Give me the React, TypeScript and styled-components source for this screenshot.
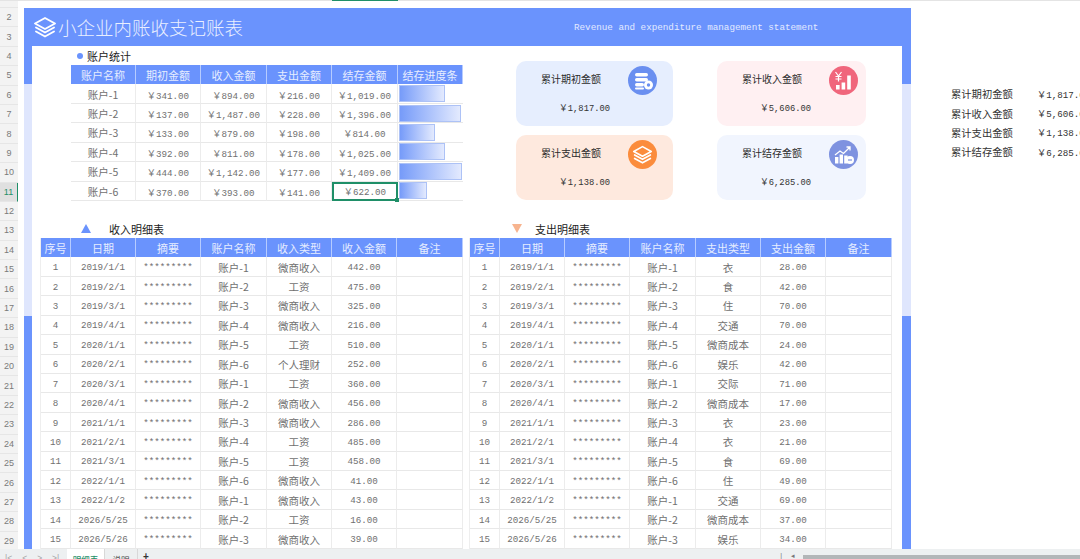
import React from 'react';
import styled, { createGlobalStyle } from 'styled-components';

const GlobalStyle = createGlobalStyle`
  html, body {
    margin: 0;
    padding: 0;
    background: #fff;
  }
  * {
    box-sizing: border-box;
  }
`;

const BLUE = '#6a93fd';
const PALE = '#dfe6fd';
const MONO = '"Liberation Mono", "Noto Sans CJK SC", monospace';
const CJK = '"Noto Sans CJK SC", "Liberation Sans", sans-serif';

const Page = styled.div`
  width: 1080px;
  height: 559px;
  overflow: hidden;
  display: flex;
  flex-direction: column;
  font-family: ${CJK};
  background: #fff;
`;
const Workspace = styled.div`
  height: 549px;
  display: flex;
  overflow: hidden;
`;
const Gutter = styled.div`
  width: 18px;
  flex: none;
  background: #f3f3f3;
  border-top: 1px solid #e4e4e4;
`;
const GutterCell = styled.div<{ $short?: boolean; $active?: boolean }>`
  height: ${p => (p.$short ? '7px' : '19.4px')};
  display: flex;
  align-items: center;
  justify-content: center;
  font: 9px "Liberation Sans", sans-serif;
  color: ${p => (p.$active ? '#1f8f68' : '#7a7a7a')};
  background: ${p => (p.$active ? '#e0e0e0' : 'transparent')};
  border-bottom: 1px solid #e6e6e6;
  border-right: ${p => (p.$active ? '1px solid #1f8f68' : 'none')};
`;
const Main = styled.div`
  flex: 1;
  min-width: 0;
  display: flex;
  flex-direction: column;
`;
const ColumnStrip = styled.div`
  height: 8px;
  flex: none;
  border-top: 1px solid #e4e4e4;
  position: relative;
`;
const ColumnMarker = styled.div`
  position: absolute;
  top: -1px;
  left: 314px;
  width: 66px;
  height: 1px;
  background: #1f8f68;
`;
const SheetRow = styled.div`
  flex: 1;
  display: flex;
  padding-left: 6px;
  min-height: 0;
`;
const Sheet = styled.div`
  width: 887px;
  flex: none;
  display: flex;
  flex-direction: column;
  overflow: hidden;
`;
const Banner = styled.div`
  height: 38px;
  flex: none;
  background: ${BLUE};
  display: flex;
  align-items: center;
  padding-left: 9px;
  color: #e9efff;
`;
const BannerTitle = styled.div`
  font-size: 18.5px;
  font-weight: 300;
  margin-left: 1px;
  width: 516px;
  white-space: nowrap;
`;
const BannerSub = styled.div`
  font: 9.25px ${MONO};
  white-space: nowrap;
  color: #e3eaff;
`;
const SheetBody = styled.div`
  flex: 1;
  min-height: 0;
  padding: 0 9px 0 8px;
  background: linear-gradient(
    to bottom,
    ${BLUE} 0,
    ${BLUE} 38px,
    ${PALE} 38px,
    ${PALE} 270px,
    ${BLUE} 270px,
    ${BLUE} 100%
  );
`;
const Inner = styled.div`
  height: 100%;
  background: #fff;
  overflow: hidden;
`;
const TopSection = styled.div`
  height: 173px;
  display: flex;
  padding-left: 39px;
`;
const AccountColumn = styled.div`
  width: 392px;
  flex: none;
`;
const SectionHeading = styled.div`
  height: 19px;
  display: flex;
  align-items: center;
  padding-left: 6px;
  font-size: 11px;
  color: #222;
`;
const Dot = styled.span`
  width: 6px;
  height: 6px;
  border-radius: 50%;
  background: ${BLUE};
  margin-right: 4px;
`;
const Table = styled.div<{ $cols: string; $edge?: boolean }>`
  display: grid;
  grid-template-columns: ${p => p.$cols};
  grid-auto-rows: 19.43px;
  box-shadow: ${p => (p.$edge ? '-1px 0 0 #eeeeee' : 'none')};
`;
const HeaderCell = styled.div`
  background: ${BLUE};
  color: #e6edff;
  font-size: 11px;
  display: flex;
  align-items: center;
  justify-content: center;
  border-right: 1px solid #b7ccff;
  white-space: nowrap;
  &:nth-last-child(1) {
    border-right: none;
  }
`;
const Cell = styled.div`
  display: flex;
  align-items: center;
  justify-content: center;
  padding-top: 2px;
  color: #707070;
  white-space: nowrap;
  font: 9.2px ${MONO};
  border-right: 1px solid #ececec;
  border-bottom: 1px solid #e8e8e8;
`;
const NameCell = styled(Cell)`
  font: 10.5px ${CJK};
  padding-top: 1px;
`;
const SelectedCell = styled(Cell)`
  position: relative;
  padding-top: 0;
  border: 2px solid #1f8f68;
`;
const FillHandle = styled.span`
  position: absolute;
  right: -3px;
  bottom: -3px;
  width: 4px;
  height: 4px;
  background: #1f8f68;
`;
const BarCell = styled.div`
  display: flex;
  align-items: center;
  padding-left: 1px;
  border-bottom: 1px solid #e8e8e8;
`;
const Bar = styled.div`
  height: 17px;
  background: linear-gradient(to right, #769bf9, #e3eafe);
  border: 1px solid #adc2f6;
`;
const CardGrid = styled.div`
  margin: 15px 0 0 53px;
  display: grid;
  grid-template-columns: 157px 149px;
  grid-auto-rows: 65px;
  column-gap: 44px;
  row-gap: 9px;
`;
const Card = styled.div<{ $bg: string }>`
  background: ${p => p.$bg};
  border-radius: 10px;
  padding: 5px 0 0 25px;
`;
const CardHead = styled.div`
  display: flex;
  align-items: flex-start;
`;
const CardLabel = styled.div`
  width: 86px;
  flex: none;
  padding-top: 6px;
  font-size: 10px;
  line-height: 14px;
  color: #2b2b2b;
  white-space: nowrap;
`;
const IconCircle = styled.div<{ $bg: string }>`
  width: 29px;
  height: 29px;
  margin-left: 1px;
  border-radius: 50%;
  background: ${p => p.$bg};
  display: flex;
  align-items: center;
  justify-content: center;
  flex: none;
`;
const CardValue = styled.div`
  margin: 7px 0 0 18px;
  font: 8.8px/14px ${MONO};
  color: #333;
  white-space: nowrap;
`;
const BottomSection = styled.div`
  display: flex;
  padding-left: 9px;
  gap: 7px;
`;
const DetailColumn = styled.div`
  width: 422px;
  flex: none;
`;
const DetailHeading = styled.div<{ $indent: number; $gap: number }>`
  height: 19px;
  display: flex;
  align-items: center;
  padding-left: ${p => p.$indent}px;
  gap: ${p => p.$gap}px;
  font-size: 11px;
  color: #222;
`;
const SideList = styled.div`
  margin-left: 40px;
  padding-top: 76px;
  flex: none;
  width: 200px;
`;
const SideRow = styled.div`
  height: 19.4px;
  display: flex;
  align-items: center;
  color: #333;
  white-space: nowrap;
`;
const SideLabel = styled.span`
  width: 86px;
  flex: none;
  font-size: 10.3px;
`;
const SideValue = styled.span`
  font: 9.2px ${MONO};
`;
const TabBar = styled.div`
  height: 10px;
  flex: none;
  background: #edf0f1;
  display: flex;
  overflow: hidden;
`;
const TabNav = styled.div`
  width: 67px;
  flex: none;
  display: flex;
  gap: 10px;
  padding: 2px 0 0 5px;
  color: #a5a5a5;
  font: 8.5px/14px "Liberation Sans", sans-serif;
`;
const Tab = styled.div<{ $active?: boolean; $w: number }>`
  width: ${p => p.$w}px;
  flex: none;
  text-align: center;
  padding-top: 3px;
  font: ${p => (p.$active ? 500 : 400)} 8.5px/14px ${CJK};
  background: ${p => (p.$active ? '#fff' : 'transparent')};
  color: ${p => (p.$active ? '#1f8f68' : '#444')};
  border-right: 1px solid #d8d8d8;
`;
const AddTab = styled.div`
  width: 20px;
  flex: none;
  padding: 1px 0 0 5px;
  color: #333;
  font: 700 10px/14px "Liberation Sans", sans-serif;
`;
const TabSpacer = styled.div`
  flex: none;
  width: 645px;
  display: flex;
  justify-content: flex-end;
  gap: 9px;
  padding: 3px 8px 0 0;
  color: #777;
  font: 7px/8px "Liberation Sans", sans-serif;
`;
const Scrollbar = styled.div`
  flex: 1;
  height: 4px;
  margin-top: 6px;
  background: #b2b6b8;
`;

const LayersIcon = ({ size }: { size: number }) => (
  <svg width={size} height={size} viewBox="0 0 24 24" fill="none" stroke="#fff" strokeWidth="1.9" strokeLinejoin="round" strokeLinecap="round">
    <path d="M12 3 22 8.5 12 14 2 8.5Z" />
    <path d="M3 12.5 12 17.5 21 12.5" />
    <path d="M3 16.5 12 21.5 21 16.5" />
  </svg>
);

const CoinsIcon = () => (
  <svg width="22" height="20" viewBox="0 0 22 20" fill="#fff">
    <rect x="3" y="2" width="13" height="3.4" rx="1.7" />
    <rect x="3" y="7" width="13" height="3.4" rx="1.7" />
    <rect x="3" y="12" width="9" height="3.4" rx="1.7" />
    <rect x="3" y="16.4" width="9" height="2" rx="1" />
    <circle cx="16.5" cy="14" r="4.5" />
    <circle cx="16.5" cy="14" r="1.7" fill="#6a8ff0" />
  </svg>
);

const IncomeIcon = () => (
  <svg width="22" height="22" viewBox="0 0 22 22" fill="none" stroke="#fff">
    <path d="M2.5 2 5.5 6 8.5 2M5.5 6V11.5M2.5 6.5H8.5M2.5 9H8.5" strokeWidth="1.2" />
    <g fill="#fff" stroke="none">
      <rect x="3" y="15" width="3.6" height="4.5" />
      <rect x="8.6" y="12.5" width="3.6" height="7" />
      <rect x="14.2" y="5.5" width="3.6" height="14" />
    </g>
  </svg>
);

const SavingsIcon = () => (
  <svg width="22" height="22" viewBox="0 0 22 22" fill="none" stroke="#fff">
    <path d="M2 11 7 7 10.5 9.5 17 3M13.5 3H17V6.5" strokeWidth="1.3" />
    <g fill="#fff" stroke="none">
      <rect x="2" y="13" width="3.4" height="6.5" />
      <rect x="6.6" y="10.5" width="3.4" height="9" />
      <rect x="11.2" y="11.5" width="3.4" height="8" />
      <circle cx="17" cy="16" r="4" />
    </g>
    <path d="M15 16H19" stroke="#7e92e0" strokeWidth="1.2" />
  </svg>
);

const Triangle = ({ down }: { down?: boolean }) => (
  <svg width="10" height="9" viewBox="0 0 10 9">
    <polygon points={down ? '0,0 10,0 5,9' : '0,9 10,9 5,0'} fill={down ? '#f7b48f' : BLUE} />
  </svg>
);

const rowLabels = Array.from({ length: 29 }, (_, i) => i + 1);
const money = (n: number) =>
  '\uFFE5' + n.toLocaleString('en-US', { minimumFractionDigits: 2, maximumFractionDigits: 2 });

const accounts = [
  { name: '账户-1', open: 341, income: 894, out: 216, left: 1019 },
  { name: '账户-2', open: 137, income: 1487, out: 228, left: 1396 },
  { name: '账户-3', open: 133, income: 879, out: 198, left: 814 },
  { name: '账户-4', open: 392, income: 811, out: 178, left: 1025 },
  { name: '账户-5', open: 444, income: 1142, out: 177, left: 1409 },
  { name: '账户-6', open: 370, income: 393, out: 141, left: 622 }
];

const cards = [
  { label: '累计期初金额', value: money(1817), bg: '#e6eefe', icon: <CoinsIcon />, color: '#6a8ff0' },
  { label: '累计收入金额', value: money(5606), bg: '#fff0f2', icon: <IncomeIcon />, color: '#f0667c' },
  { label: '累计支出金额', value: money(1138), bg: '#fee9de', icon: <LayersIcon size={21} />, color: '#fb8c3c' },
  { label: '累计结存金额', value: money(6285), bg: '#f1f5fe', icon: <SavingsIcon />, color: '#7e92e0' }
];

const dates = [
  '2019/1/1', '2019/2/1', '2019/3/1', '2019/4/1', '2020/1/1',
  '2020/2/1', '2020/3/1', '2020/4/1', '2021/1/1', '2021/2/1',
  '2021/3/1', '2022/1/1', '2022/1/2', '2026/5/25', '2026/5/26'
];
const names = ['账户-1', '账户-2', '账户-3', '账户-4', '账户-5', '账户-6'];

const incomeRows: [string, string][] = [
  ['微商收入', '442.00'], ['工资', '475.00'], ['微商收入', '325.00'], ['微商收入', '216.00'], ['工资', '510.00'],
  ['个人理财', '252.00'], ['工资', '360.00'], ['微商收入', '456.00'], ['微商收入', '286.00'], ['工资', '485.00'],
  ['工资', '458.00'], ['微商收入', '41.00'], ['微商收入', '43.00'], ['工资', '16.00'], ['微商收入', '39.00']
];
const expenseRows: [string, string][] = [
  ['衣', '28.00'], ['食', '42.00'], ['住', '70.00'], ['交通', '70.00'], ['微商成本', '24.00'],
  ['娱乐', '42.00'], ['交际', '71.00'], ['微商成本', '17.00'], ['衣', '23.00'], ['衣', '21.00'],
  ['食', '69.00'], ['住', '49.00'], ['交通', '69.00'], ['微商成本', '37.00'], ['娱乐', '34.00']
];

const ACCOUNT_COLS = '65px 65px 66px 65px 66px 65px';
const DETAIL_COLS = '30px 65px 65px 66px 65px 65px 66px';

const DetailTable = ({ kind, rows }: { kind: string; rows: [string, string][] }) => (
  <Table $cols={DETAIL_COLS} $edge>
    {['序号', '日期', '摘要', '账户名称', `${kind}类型`, `${kind}金额`, '备注'].map(h => (
      <HeaderCell key={h}>{h}</HeaderCell>
    ))}
    {rows.map((r, i) => (
      <React.Fragment key={i}>
        <Cell>{i + 1}</Cell>
        <Cell>{dates[i]}</Cell>
        <Cell>*********</Cell>
        <NameCell>{names[i % 6]}</NameCell>
        <NameCell>{r[0]}</NameCell>
        <Cell>{r[1]}</Cell>
        <Cell />
      </React.Fragment>
    ))}
  </Table>
);

export default function App() {
  return (
    <Page>
      <GlobalStyle />
      <Workspace>
        <Gutter>
          {rowLabels.map(n => (
            <GutterCell key={n} $short={n === 1} $active={n === 11}>
              {n === 1 ? '' : n}
            </GutterCell>
          ))}
        </Gutter>
        <Main>
          <ColumnStrip>
            <ColumnMarker />
          </ColumnStrip>
          <SheetRow>
            <Sheet>
              <Banner>
                <LayersIcon size={24} />
                <BannerTitle>小企业内账收支记账表</BannerTitle>
                <BannerSub>Revenue and expenditure management statement</BannerSub>
              </Banner>
              <SheetBody>
                <Inner>
                  <TopSection>
                    <AccountColumn>
                      <SectionHeading>
                        <Dot />
                        账户统计
                      </SectionHeading>
                      <Table $cols={ACCOUNT_COLS}>
                        {['账户名称', '期初金额', '收入金额', '支出金额', '结存金额', '结存进度条'].map(h => (
                          <HeaderCell key={h}>{h}</HeaderCell>
                        ))}
                        {accounts.map((a, i) => (
                          <React.Fragment key={a.name}>
                            <NameCell>{a.name}</NameCell>
                            <Cell>{money(a.open)}</Cell>
                            <Cell>{money(a.income)}</Cell>
                            <Cell>{money(a.out)}</Cell>
                            {i === 5 ? (
                              <SelectedCell>
                                {money(a.left)}
                                <FillHandle />
                              </SelectedCell>
                            ) : (
                              <Cell>{money(a.left)}</Cell>
                            )}
                            <BarCell>
                              <Bar style={{ width: (a.left / 1409) * 63 }} />
                            </BarCell>
                          </React.Fragment>
                        ))}
                      </Table>
                    </AccountColumn>
                    <CardGrid>
                      {cards.map(c => (
                        <Card key={c.label} $bg={c.bg}>
                          <CardHead>
                            <CardLabel>{c.label}</CardLabel>
                            <IconCircle $bg={c.color}>{c.icon}</IconCircle>
                          </CardHead>
                          <CardValue>{c.value}</CardValue>
                        </Card>
                      ))}
                    </CardGrid>
                  </TopSection>
                  <BottomSection>
                    <DetailColumn>
                      <DetailHeading $indent={40} $gap={18}>
                        <Triangle />
                        收入明细表
                      </DetailHeading>
                      <DetailTable kind="收入" rows={incomeRows} />
                    </DetailColumn>
                    <DetailColumn>
                      <DetailHeading $indent={42} $gap={13}>
                        <Triangle down />
                        支出明细表
                      </DetailHeading>
                      <DetailTable kind="支出" rows={expenseRows} />
                    </DetailColumn>
                  </BottomSection>
                </Inner>
              </SheetBody>
            </Sheet>
            <SideList>
              {cards.map(c => (
                <SideRow key={c.label}>
                  <SideLabel>{c.label}</SideLabel>
                  <SideValue>{c.value}</SideValue>
                </SideRow>
              ))}
            </SideList>
          </SheetRow>
        </Main>
      </Workspace>
      <TabBar>
        <TabNav>
          <span>|&lt;</span>
          <span>&lt;</span>
          <span>&gt;</span>
          <span>&gt;|</span>
        </TabNav>
        <Tab $active $w={38}>明细表</Tab>
        <Tab $w={33}>说明</Tab>
        <AddTab>+</AddTab>
        <TabSpacer>
          <span>|</span>
          <span>◂</span>
        </TabSpacer>
        <Scrollbar />
      </TabBar>
    </Page>
  );
}
